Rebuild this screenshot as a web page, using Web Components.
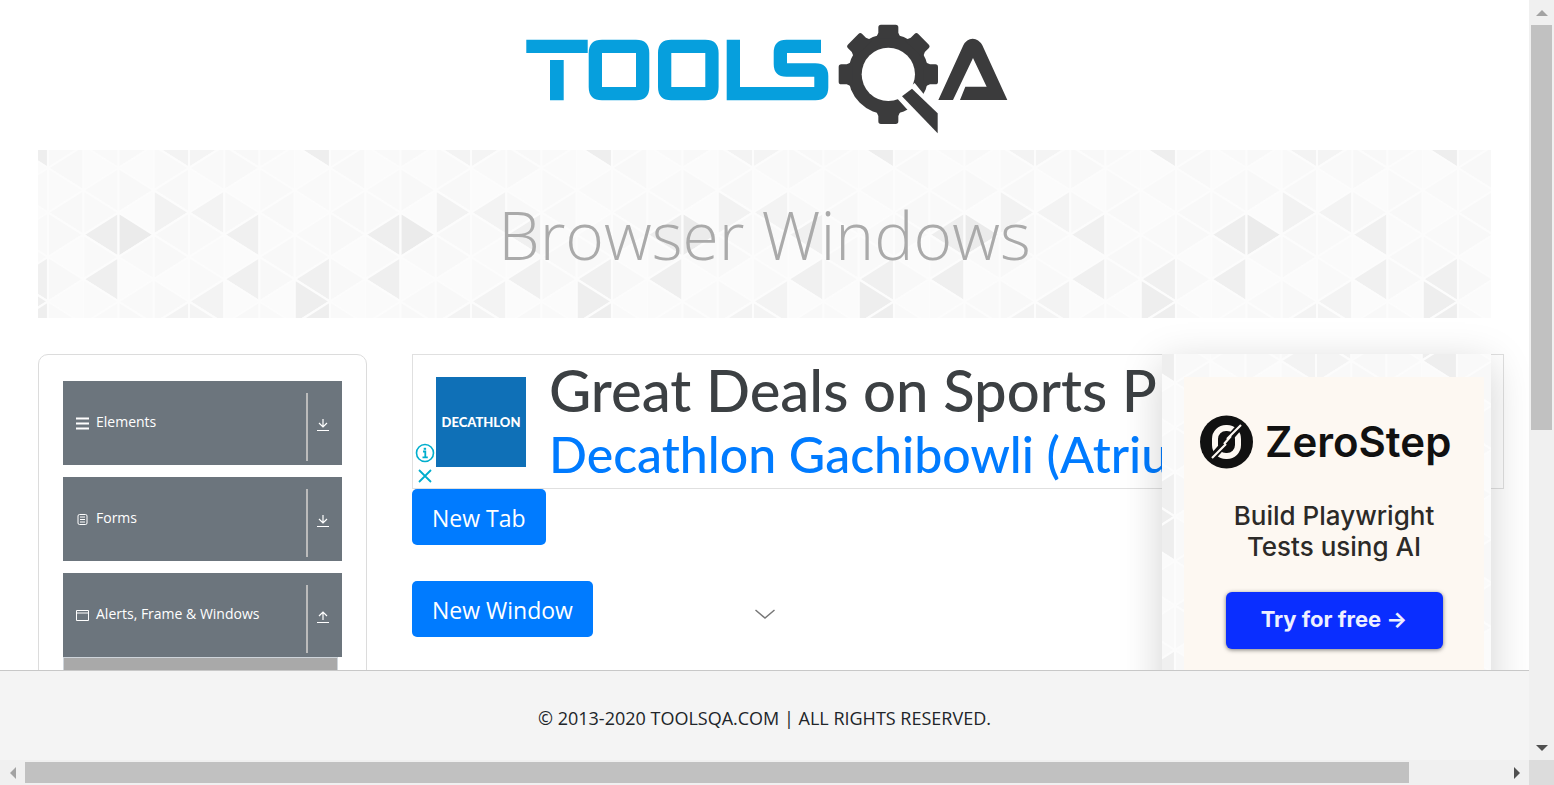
<!DOCTYPE html>
<html lang="en">
<head>
<meta charset="utf-8">
<title>ToolsQA - Browser Windows</title>
<style>
html, body { margin: 0; height: 100%; }
body { font-family: "Open Sans", "Noto Sans", sans-serif; color: #212529; background: #fff; overflow: hidden; }
</style>
</head>
<body>
<scroll-frame>
  <demo-page>
    <site-logo slot="logo"></site-logo>
    <page-banner slot="banner">Browser Windows</page-banner>
    <nav-panel slot="nav">
      <nav-group icon="lines" arrow="down">Elements</nav-group>
      <nav-group icon="form" arrow="down">Forms</nav-group>
      <nav-group icon="window" arrow="up" open>Alerts, Frame &amp; Windows</nav-group>
    </nav-panel>
    <banner-ad slot="main"></banner-ad>
    <window-actions slot="main"></window-actions>
    <side-ad slot="aside"></side-ad>
  </demo-page>
  <site-footer>© 2013-2020 TOOLSQA.COM | ALL RIGHTS RESERVED.</site-footer>
</scroll-frame>

<script>
function define(name, html, setup) {
  const template = document.createElement('template');
  template.innerHTML = html;
  customElements.define(name, class extends HTMLElement {
    constructor() {
      super();
      this.attachShadow({ mode: 'open' }).append(template.content.cloneNode(true));
    }
    connectedCallback() { if (setup) setup(this, this.shadowRoot); }
  });
}

/* Page area with its two scroll bars */
define('scroll-frame', `
<style>
:host { display: grid; grid-template: minmax(0, 1fr) 25px / minmax(0, 1fr) 25px; height: 100vh; }
.view { display: flex; flex-direction: column; min-height: 0; overflow: hidden; }
.bar { display: flex; align-items: center; background: #f0f0f0; }
.bar.v { flex-direction: column; }
.end { flex: none; width: 25px; height: 25px; display: grid; place-items: center; }
.track { flex: 1; display: flex; align-self: stretch; }
.v .track { padding: 0 2px; flex-direction: column; }
.h .track { padding: 2px 0; }
.thumb { background: #c1c1c1; }
.v .thumb { height: 57%; }
.h .thumb { width: 93.6%; }
.corner { background: #dcdcdc; }
svg { display: block; }
</style>
<div class="view"><slot></slot></div>
<div class="bar v">
  <div class="end"><svg width="12" height="12"><path d="M0 9 6 3l6 6z" fill="#a3a3a3"/></svg></div>
  <div class="track"><div class="thumb"></div></div>
  <div class="end"><svg width="12" height="12"><path d="M0 3h12L6 9z" fill="#505050"/></svg></div>
</div>
<div class="bar h">
  <div class="end"><svg width="12" height="12"><path d="M9 0v12L3 6z" fill="#a3a3a3"/></svg></div>
  <div class="track"><div class="thumb"></div></div>
  <div class="end"><svg width="12" height="12"><path d="M3 0v12l6-6z" fill="#505050"/></svg></div>
</div>
<div class="corner"></div>`);

define('demo-page', `
<style>
:host { display: block; flex: 1; min-height: 0; overflow: hidden; }
.inner { padding: 0 38px; }
.row { display: grid; grid-template-columns: minmax(0, 329fr) minmax(0, 705fr) minmax(0, 329fr); gap: 45px; margin-top: 36px; align-items: start; }
aside { position: relative; z-index: 1; }
</style>
<div class="inner">
  <header><slot name="logo"></slot><slot name="banner"></slot></header>
  <div class="row">
    <nav><slot name="nav"></slot></nav>
    <main><slot name="main"></slot></main>
    <aside><slot name="aside"></slot></aside>
  </div>
</div>`);

define('site-logo', `
<style>
:host { display: flex; justify-content: center; height: 150px; }
a, svg { display: block; }
</style>
<a href="#" aria-label="ToolsQA">
<svg width="489" height="150" viewBox="520 0 489 150">
  <g fill="#069fdd">
    <path d="M526.3 39.7h61.4V53h-61.4zM550 60h13.7v40.3H550z"/>
    <path fill-rule="evenodd" d="M602 39.7h34q13.3 0 13.3 13.3v34q0 13.3-13.3 13.3h-34q-13.3 0-13.3-13.3V53q0-13.3 13.3-13.3zM602 53v34h34V53z"/>
    <path fill-rule="evenodd" d="M671.3 39.7h34q13.3 0 13.3 13.3v34q0 13.3-13.3 13.3h-34q-13.3 0-13.3-13.3V53q0-13.3 13.3-13.3zM671.3 53v34h34V53z"/>
    <path d="M726.7 39.7H740V87h74.3V76.7H786.5Q773.7 76.7 773.7 64V52.5Q773.7 39.7 786.5 39.7H821V53H787v10.3h28.3Q828.3 63.3 828.3 76v11.5q0 12.8-12.8 12.8h-88.8z"/>
  </g>
  <g transform="translate(820 14) scale(.33333)" fill="#3b3b3c">
    <circle cx="205" cy="181" r="121"/>
    <g id="teeth"></g>
    <circle cx="205" cy="181" r="80" fill="#fff"/>
    <path d="M284 207l30 37 90 60-40 74-103-92-30-33z" fill="#fff"/>
    <path d="M246 247l30-23 77 74v60z"/>
    <path d="M355 258 430 94q10-20 28-20t29 20l75 164H420l16-40h64L459 132 399 258z"/>
  </g>
</svg>
</a>`, (el, root) => {
  const teeth = root.getElementById('teeth');
  for (const angle of [0, 45, 90, 180, 225, 270, 315]) {
    const p = document.createElementNS('http://www.w3.org/2000/svg', 'path');
    p.setAttribute('d', 'M312 143l18 8h16q8 0 8 8v44q0 8-8 8h-16l-18 8z');
    p.setAttribute('transform', `rotate(${angle} 205 181)`);
    if (angle !== 45) teeth.append(p);
  }
});

/* Repeating triangle texture; x and y shift the tile */
define('triangle-texture', `
<style>
:host { display: block; }
svg { display: block; width: 100%; height: 100%; }
</style>
<svg aria-hidden="true"><defs><pattern id="tile" width="282" height="178" patternUnits="userSpaceOnUse"></pattern></defs>
<rect width="100%" height="100%" fill="url(#tile)"/></svg>`, (el, root) => {
  const tile = root.getElementById('tile');
  const dx = Number(el.getAttribute('x')), dy = Number(el.getAttribute('y'));
  tile.setAttribute('patternTransform', `translate(${dx} ${dy})`);
  const W = 282 / 8, H = 178 / 8;
  /* shade by column, direction of the point, and half-row of the point */
  const dark = { '7L-1': '#eeeeee', '3L-1': '#f3f3f3', '4R-1': '#f4f4f4', '1L3': '#eeeeee', '2R3': '#ebebeb',
    '1L5': '#efefef', '3R2': '#f2f2f2', '4L2': '#f3f3f3', '5L3': '#f0f0f0', '5L5': '#f0f0f0', '4L6': '#f3f3f3',
    '7L5': '#f0f0f0', '7R6': '#eeeeee' };
  const light = ['#f9f9f9', '#fbfbfb', '#f8f8f8', '#fafafa', '#f9f9f9', '#fbfbfb', '#f8f8f8'];
  let out = '';
  for (let c = 0; c < 8; c++) {
    for (let r = -1; r < 9; r++) {
      const left = (r + c) % 2 === 0;
      const x0 = c * W, x1 = x0 + W, y = r * H;
      const key = c + (left ? 'L' : 'R');
      const row = r === 7 ? -1 : r;
      const fill = dark[key + row] || light[(c * 3 + (r + 1) % 8 * 5 + (left ? 1 : 0)) % 7];
      const pts = left ? [x0, y, x1, y - H, x1, y + H] : [x1, y, x0, y - H, x0, y + H];
      out += `<polygon points="${pts}" fill="${fill}" stroke="#fcfcfc" stroke-width="2.2" stroke-linejoin="round"/>`;
    }
  }
  tile.innerHTML = out;
});

define('page-banner', `
<style>
:host { display: grid; height: 168px; }
triangle-texture, h1 { grid-area: 1 / 1; min-height: 0; }
h1 { margin: 0; place-self: center; font-size: 66px; line-height: 80px; font-weight: 300; color: #aaa; }
</style>
<triangle-texture x="10" y="18"></triangle-texture>
<h1><slot></slot></h1>`);

define('nav-panel', `
<style>
:host { display: flex; flex-direction: column; gap: 12px; box-sizing: border-box; min-height: 520px; padding: 26px 24px; border: 1px solid #dcdcdc; border-radius: 10px; }
</style>
<slot></slot>`);

const navIcons = {
  lines: '<path d="M0 2.5h13M0 7.5h13M0 12.5h13" stroke-width="2"/>',
  form: '<rect x="2" y="2.500" width="9" height="10" rx="1.500" fill="none"/><path d="M4 5h5M4 7.500h5M4 10h5" stroke-width="1"/>',
  window: '<path d="M.5 2.500h12v10H.5zM.5 5h12" fill="none"/>'
};
const arrows = {
  down: '<path d="M6 1v8M2 5l4 4 4-4M0 12.500h12"/>',
  up: '<path d="M6 10V2M2 6l4-4 4 4M0 12.500h12"/>'
};
define('nav-group', `
<style>
:host { display: block; }
button { display: flex; align-items: center; width: 100%; height: 84px; margin: 0; padding: 0 13px; border: 0; background: #6c757d; color: #fff; font: 14px/20px "Open Sans", sans-serif; text-align: left; }
.label { flex: 1; margin: 0 0 2px 7px; white-space: nowrap; }
.rule { width: 2px; height: 68px; margin: 8px 9px 0 0; background: #bbb; align-self: center; }
svg { display: block; flex: none; stroke: #fff; fill: none; }
#arrow { margin-top: 4px; }
.list { display: none; height: 180px; box-sizing: border-box; border: 1px solid #ced4da; background: #a9a9a9; width: calc(100% - 4px); }
:host([open]) .list { display: block; }
</style>
<button type="button"><svg id="icon" width="13" height="15"></svg><span class="label"><slot></slot></span><span class="rule"></span><svg id="arrow" width="12" height="14" stroke-width="1.2"></svg></button>
<div class="list"></div>`, (el, root) => {
  root.getElementById('icon').innerHTML = navIcons[el.getAttribute('icon')];
  root.getElementById('arrow').innerHTML = arrows[el.getAttribute('arrow')];
  root.querySelector('button').setAttribute('aria-expanded', el.hasAttribute('open'));
});

define('banner-ad', `
<style>
:host { display: flex; align-items: center; box-sizing: border-box; width: 1092px; height: 135px; border: 1px solid #e0e0e0; overflow: hidden; font-family: Lato, sans-serif; }
.choices { align-self: flex-end; display: grid; justify-items: center; gap: 4px; width: 23px; padding-bottom: 3px; }
svg { display: block; }
.brand { display: grid; place-items: center; flex: none; width: 90px; height: 90px; background: #0f70b7; color: #fff; font-size: 13px; font-weight: 900; text-decoration: none; }
.copy { margin-left: 23px; text-decoration: none; white-space: nowrap; }
.title, .place { display: block; line-height: 64px; font-weight: 500; }
.title { font-size: 58px; color: #3c4043; }
.place { font-size: 50px; color: #007bff; }
</style>
<div class="choices">
  <svg width="20" height="20" fill="none" stroke="#00aecd" stroke-width="1.600"><circle cx="10" cy="10" r="8.500"/><path d="M8 8.500h2.300V14M7.500 14.300h5.300" stroke-width="1.800"/><path d="M9.900 4.800v2" stroke-width="2.400"/></svg>
  <svg width="18" height="18" stroke="#00aecd" stroke-width="1.800"><path d="M3 3l12 12M15 3 3 15"/></svg>
</div>
<a class="brand" href="#">DECATHLON</a>
<a class="copy" href="#"><span class="title">Great Deals on Sports P</span><span class="place">Decathlon Gachibowli (Atriu</span></a>`);

define('window-actions', `
<style>
:host { display: block; }
.line { display: grid; grid-template-columns: 1fr auto 1fr; align-items: center; margin-bottom: 36px; }
button { justify-self: start; height: 56px; margin: 0; padding: 2px 20px 0; border: 0; border-radius: 5px; background: #007bff; color: #fff; font: 23px/36px "Open Sans", sans-serif; white-space: nowrap; }
svg { display: block; margin-top: 10px; }
</style>
<div class="line"><button type="button">New Tab</button></div>
<div class="line"><button type="button">New Window</button><svg width="20" height="10" fill="none" stroke="#777" stroke-width="1.500"><path d="M.5 1 10 9l9.500-8"/></svg></div>`);

define('side-ad', `
<style>
:host { display: grid; height: 640px; box-shadow: 0 10px 40px rgba(0, 0, 0, .18); }
triangle-texture, .card { grid-area: 1 / 1; min-height: 0; min-width: 0; }
.card { width: 300px; margin: 23px 7px 23px 22px; box-sizing: border-box; padding-top: 38px; background: #fdf8f2; font-family: Inter, sans-serif; text-align: center; display: flex; flex-direction: column; align-items: center; }
.brand { display: flex; align-items: center; align-self: flex-start; gap: 12px; height: 54px; margin-left: 16px; color: #111; font-size: 42px; line-height: 54px; font-weight: 600; }
.brand svg { flex: none; }
p { margin: 31px 0 30px; color: #2c2a28; font-size: 26px; line-height: 31px; font-weight: 500; width: 240px; }
button { width: 217px; height: 57px; padding: 0 0 4px; border: 0; border-radius: 6px; background: #0a2eff; color: #eef0ff; font: 700 22px/30px Inter, sans-serif; box-shadow: 0 1px 4px rgba(0, 0, 0, .5); white-space: nowrap; }
</style>
<triangle-texture x="13" y="29"></triangle-texture>
<div class="card">
  <div class="brand"><svg width="53" height="54" viewBox="0 0 53 54"><circle cx="26.500" cy="27" r="26.500" fill="#111"/><rect x="15" y="13" width="23" height="28" rx="11" fill="none" stroke="#fdf8f2" stroke-width="6"/><path d="M11 44 42 9" stroke="#111" stroke-width="7"/><path d="M12 43l14-14M24 29l7-8M27 24l14-14" fill="none" stroke="#fdf8f2" stroke-width="2.200"/></svg><span>ZeroStep</span></div>
  <p>Build Playwright Tests using AI</p>
  <button type="button">Try for free →</button>
</div>`);

define('site-footer', `
<style>
:host { display: block; flex: none; }
footer { display: flex; align-items: center; justify-content: center; box-sizing: border-box; height: 90px; padding-top: 4px; border-top: 1px solid #c8c8c8; background: #f4f4f4; font-size: 18px; line-height: 24px; color: #212529; white-space: nowrap; }
</style>
<footer><span><slot></slot></span></footer>`);
</script>
</body>
</html>
